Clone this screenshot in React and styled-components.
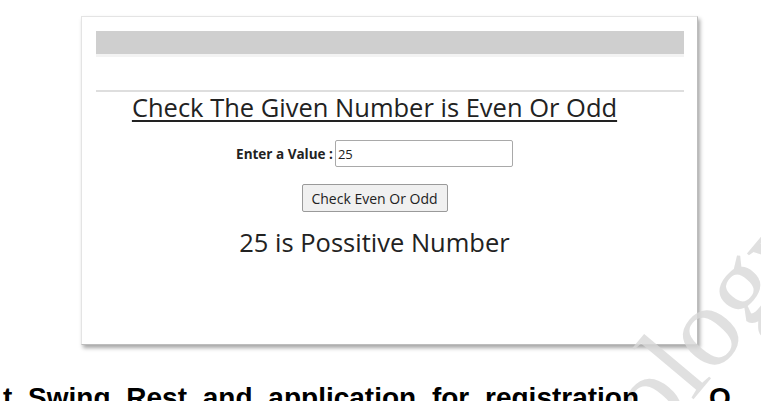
import React from 'react';
import styled, { createGlobalStyle } from 'styled-components';

const GlobalStyle = createGlobalStyle`
  html, body {
    margin: 0;
    padding: 0;
    background: #fff;
    overflow: hidden;
  }
`;

const Page = styled.div`
  position: relative;
  width: 761px;
  height: 401px;
  overflow: hidden;
  display: flex;
  flex-direction: column;
`;

const Card = styled.div`
  flex-shrink: 0;
  margin: 16px 0 0 81px;
  width: 617px;
  height: 329px;
  box-sizing: border-box;
  padding: 14px 13px 0 14px;
  background: #fff;
  border: 1px solid #e4e4e4;
  border-right-color: #bdbdbd;
  border-bottom-color: #bdbdbd;
  box-shadow: 2px 3px 4px rgba(0, 0, 0, 0.35);
  font-family: "Open Sans", "Noto Sans", sans-serif;
  color: #222;
`;

const GreyBar = styled.div`
  height: 23px;
  background: #cfcfcf;
  border-bottom: 3px solid #f3f3f3;
`;

const Rule = styled.hr`
  margin: 33px 0 0;
  border: 0;
  border-top: 2px solid #dedede;
`;

const Content = styled.div`
  display: flex;
  flex-direction: column;
  align-items: center;
  padding-right: 31px;
`;

const Title = styled.h2`
  margin: 0;
  font-size: 25.5px;
  line-height: 30px;
  font-weight: 400;
  text-decoration: underline;
  text-underline-offset: 3px;
  text-decoration-thickness: 1.5px;
`;

const Row = styled.label`
  display: flex;
  align-items: center;
  margin-top: 18px;
  font-size: 13.5px;
  font-weight: 700;
`;

const Input = styled.input`
  width: 178px;
  height: 27px;
  box-sizing: border-box;
  margin-left: 2px;
  padding: 0 2px;
  border: 1px solid #a9a9a9;
  border-radius: 2px;
  font-family: "Open Sans", "Noto Sans", sans-serif;
  font-size: 13px;
  color: #222;
`;

const Button = styled.button`
  margin-top: 17px;
  width: 146px;
  height: 28px;
  padding: 0;
  background: #f0f0f0;
  border: 1px solid #9a9a9a;
  border-radius: 2px;
  font-family: "Open Sans", "Noto Sans", sans-serif;
  font-size: 14px;
  color: #222;
`;

const Result = styled.div`
  margin-top: 15px;
  font-size: 25.5px;
  line-height: 30px;
`;

const Caption = styled.div`
  position: relative;
  z-index: 2;
  flex-shrink: 0;
  margin-top: 37px;
  padding-left: 3px;
  white-space: nowrap;
  font-family: "Liberation Sans", Arial, sans-serif;
  font-weight: 700;
  font-size: 28px;
  line-height: 32px;
  color: #000;
  word-spacing: 8px;
`;

const Gap = styled.span`
  display: inline-block;
  width: ${(p) => p.$w}px;
`;

const Watermark = styled.div`
  position: absolute;
  z-index: 1;
  left: 655px;
  top: 349px;
  transform: rotate(-50deg);
  transform-origin: 0 96px;
  font-family: "Liberation Serif", serif;
  font-size: 115px;
  line-height: 1;
  color: #d9d9d9;
  opacity: 0.8;
  white-space: nowrap;
  pointer-events: none;
`;

export default function App() {
  return (
    <Page>
      <GlobalStyle />
      <Card>
        <GreyBar />
        <Rule />
        <Content>
          <Title>Check The Given Number is Even Or Odd</Title>
          <Row>
            Enter a Value :
            <Input defaultValue="25" />
          </Row>
          <Button>Check Even Or Odd</Button>
          <Result>25 is Possitive Number</Result>
        </Content>
      </Card>
      <Caption>
        t Swing Rest and application for registration<Gap $w={70} />O
      </Caption>
      <Watermark>ology</Watermark>
    </Page>
  );
}
